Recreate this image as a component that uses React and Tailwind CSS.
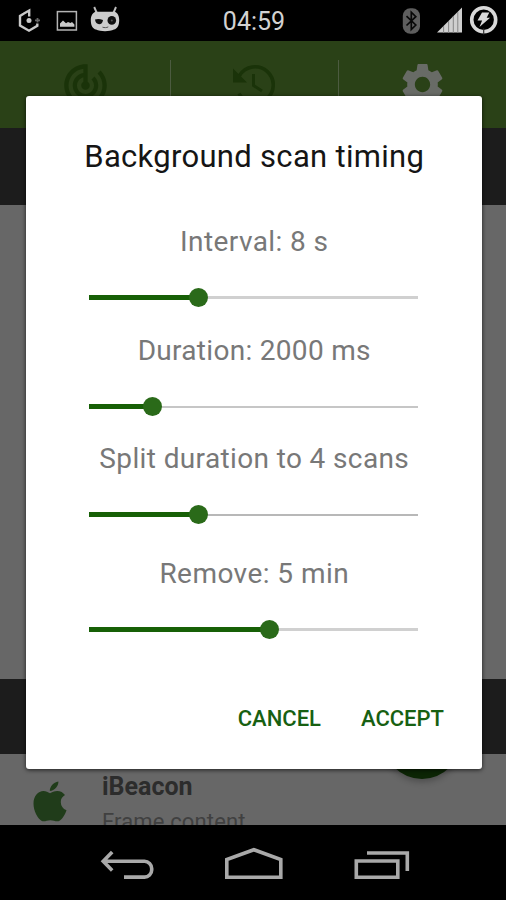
import { useState } from 'react'
import { MdTrackChanges, MdSettings } from 'react-icons/md'

const SLIDERS = [
  { id: 'interval', label: 'Interval: 8 s', pct: 33.3, gap: 'h-[109px]', track: 'h-[3px] bg-[#d0d0d0]', spacing: 'tracking-[0.4px]' },
  { id: 'duration', label: 'Duration: 2000 ms', pct: 19.2, gap: 'h-[108px]', track: 'h-[2px] bg-[#c6c6c6]', spacing: 'tracking-[0.3px]' },
  { id: 'split', label: 'Split duration to 4 scans', pct: 33.3, gap: 'h-[115px]', track: 'h-[2px] bg-[#b8b8b8]', spacing: 'tracking-[0.37px]' },
  { id: 'remove', label: 'Remove: 5 min', pct: 54.7, gap: 'h-[109px]', track: 'h-[3px] bg-[#d0d0d0]', spacing: 'tracking-[0.45px]' },
]

function StatusBar() {
  return (
    <div className="relative h-[41px] bg-black flex items-center justify-between">
      {/* Notifications */}
      <svg width="130" height="41" viewBox="0 0 130 41" fill="none">
        <path d="M24 13.500L20 16v9.500l9 5.200 8.300-4.800v-2.400M23.500 13.800l5.700-3.300v6" stroke="#c9c9c9" strokeWidth="2.400" />
        <circle cx="29" cy="20.500" r="2.500" fill="#c9c9c9" />
        <path d="M35 20.300h5M37.500 18v4.600" stroke="#666" strokeWidth="1.800" />
        <rect x="57.400" y="11.600" width="19" height="18.400" stroke="#b4b4b4" strokeWidth="1.500" />
        <path d="M60 26.800v-3.200l3-3.200 3 2.900 2-1.200 2.500 1 1.500-1 2.400 2.400v2.300z" fill="#c9c9c9" />
        <path d="M94.200 7l2.600 6M116 7l-2.600 6" stroke="#bdbdbd" strokeWidth="1.900" />
        <path d="M96 11.400c4 .6 14 .6 18.300 0 3.200 1 4.900 4.300 4.900 8.600 0 6-2.200 8.700-5.200 9.600-4.500 2.200-13.500 2.200-18 0-3-.9-5.200-3.600-5.200-9.600 0-4.300 2-7.600 5.200-8.600z" fill="#cdcdcd" />
        <circle cx="111.800" cy="20.400" r="4.300" fill="#111" />
        <circle cx="111.800" cy="20.400" r="1" fill="#555" />
        <path d="M95 19.600c2.500-.9 5-.6 8 .3-.3 2.800-1.800 4.300-3.900 4.300S95.300 22.500 95 19.600z" fill="#111" />
        <path d="M102.500 27.200c2 .6 4 .6 5.800-.3" stroke="#555" strokeWidth="1" />
      </svg>

      <div className="absolute inset-0 flex items-center justify-center text-[25px] text-[#d2d2d2] pt-[2px] pl-[2px]">
        <span>04:59</span>
      </div>

      {/* Bluetooth, signal, battery */}
      <svg width="116" height="41" viewBox="390 0 116 41" fill="none">
        <rect x="402.800" y="8.200" width="17.200" height="25.600" rx="7.500" fill="#5e5e5e" />
        <path d="M406.500 16.200l9.300 8.800-4.500 4.500V12.200l4.500 4.500-9.300 8.800" stroke="#080808" strokeWidth="1.700" />
        <path d="M437 32.500L462 7.500v25z" fill="#cfcfcf" />
        <path d="M443.600 26v7M448.600 21v12M453.300 16v17M457.800 12v21" stroke="#858585" strokeWidth="1" />
        <circle cx="483.700" cy="19.700" r="12" stroke="#d8d8d8" strokeWidth="3.600" />
        <path d="M483.700 28.500v6" stroke="#333" strokeWidth="1.200" />
        <path d="M482 12.500h7.300l-2.600 5.200h3.400l-10.600 9.200 2.600-6.500h-4.600z" fill="#d8d8d8" />
      </svg>
    </div>
  )
}

function HistoryIcon() {
  return (
    <svg width="48" height="48" viewBox="0 0 48 48" fill="none" stroke="#1a3309" strokeWidth="3.600">
      <path d="M8.500 15.500A18.200 18.200 0 1 1 8 33.500" />
      <path d="M2 8.500v14h14z" fill="#1a3309" stroke="none" />
      <path d="M22.500 14v11.500l8.500 5.500" strokeWidth="3" />
    </svg>
  )
}

function Toolbar() {
  return (
    <div className="h-[87px] bg-[#2a4117] flex items-start pt-[19px]">
      <div className="w-[170px] flex justify-center">
        <MdTrackChanges size={51} className="text-[#1a3309]" />
      </div>
      <div className="w-[169px] h-[68px] flex justify-center border-x-[1.500px] border-[#4c5b40]">
        <HistoryIcon />
      </div>
      <div className="w-[167px] flex justify-center">
        <MdSettings size={51} className="-mt-px text-[#686b66]" />
      </div>
    </div>
  )
}

function AppleIcon() {
  return (
    <svg width="34" height="41" viewBox="33 781 34 41" fill="#203c1a">
      <path d="M49.800 791c-.3-4.200 3.500-9 8.600-9.600.3 4.200-3.800 9.200-8.600 9.600z" />
      <path d="M50 793.200c2-1 4.200-2.300 7.200-2.300 3.400 0 6 1.500 7.800 4.200-3 1.800-4.300 4.100-4.200 7.200.1 3.800 2 6.500 5.700 8-1.300 4.200-4.200 9-7.400 10.700-2.700 1-5.600-.8-8.800-.8s-5.600 1.700-8.500.8c-4.400-2.500-8.300-10.400-8.300-17.500 0-7.500 4.600-12.500 10-12.500 2.500 0 4.500 1.300 6.500 2.200z" />
    </svg>
  )
}

function Content() {
  return (
    <div className="relative h-[71px] bg-[#676767] flex overflow-hidden">
      <div className="w-[102px] pl-[33px] pt-[27px]">
        <AppleIcon />
      </div>
      <div className="pt-[18px] whitespace-nowrap">
        <div className="text-[25px] leading-[29px] font-bold text-[#2c2c2c]">iBeacon</div>
        <div className="text-[22px] leading-[28px] mt-[7px] tracking-[0.15px] text-[#404040]">Frame content</div>
      </div>
      <div className="absolute left-[383px] -top-[53px] w-[78px] h-[78px] rounded-full bg-[#0c2505] shadow-[0_3px_6px_rgba(0,0,0,0.25)]" />
    </div>
  )
}

function NavBar() {
  return (
    <div className="h-[75px] bg-black">
      <svg width="506" height="75" viewBox="0 825 506 75" fill="none" stroke="#a9a9a9" strokeWidth="3.600">
        <path d="M103 861.300h41.500a7.200 7.200 0 0 1 7.200 7.200v1.400a7.200 7.200 0 0 1-7.200 7.200H124M112.200 852l-9 9.300 9 9.200" />
        <path d="M226.800 877.200v-17.700l27-9.800 27 9.800v17.700z" />
        <path d="M356.300 861h41.500v16.200h-41.500zM367 853h40.300v18" />
      </svg>
    </div>
  )
}

function Slider({ pct, track }) {
  return (
    <div className="relative w-[329px] h-[20px] flex items-center">
      <div className={`w-full ${track}`} />
      <div className="absolute left-0 h-[5px] bg-[#176006]" style={{ width: `${pct}%` }} />
      <div className="absolute w-[19px] h-[19px] -ml-[9.500px] rounded-full bg-[#2a6a19]" style={{ left: `${pct}%` }} />
    </div>
  )
}

function Dialog() {
  return (
    <div className="absolute left-[25.500px] top-[95.500px] w-[456.500px] h-[673px] rounded-[3px] bg-white flex flex-col items-center shadow-[0_1px_4px_rgba(0,0,0,0.7)]">
      <h1 className="mt-[42px] h-[87px] pl-px text-[31px] leading-[38px] tracking-[0.3px] text-[#151515] whitespace-nowrap">Background scan timing</h1>
      {SLIDERS.map(({ id, label, pct, gap, track, spacing }) => (
        <div key={id} className={`${gap} flex flex-col items-center`}>
          <div className={`pl-px text-[28px] leading-[34px] text-[#787878] whitespace-nowrap ${spacing}`}>{label}</div>
          <div className="mt-[29px]">
            <Slider pct={pct} track={track} />
          </div>
        </div>
      ))}
      <div className="w-full flex justify-end gap-[40px] pr-[38px] pt-[39px] text-[22px] leading-[28px] font-medium text-[#176012]">
        <button>CANCEL</button>
        <button>ACCEPT</button>
      </div>
    </div>
  )
}

export default function App() {
  const [open] = useState(true)

  return (
    <div className="relative w-[506px] h-[900px] overflow-hidden flex flex-col font-[Roboto,sans-serif]">
      <StatusBar />
      <Toolbar />
      <div className="h-[77px] bg-[#1c1c1c]" />
      <div className="h-[474px] bg-[#676767]" />
      <div className="h-[75px] bg-[#1c1c1c]" />
      <Content />
      <NavBar />
      {open && <Dialog />}
    </div>
  )
}
